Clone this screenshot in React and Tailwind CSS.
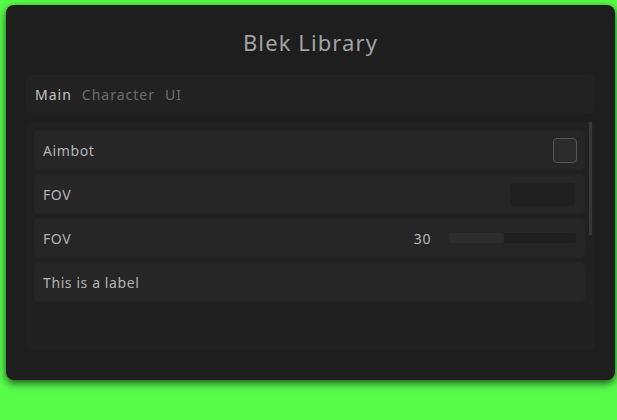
import { useState } from 'react'

const font = { fontFamily: '"Noto Sans", Lato, sans-serif' }

function Row({ children }) {
  return (
    <div className="h-10 shrink-0 flex items-center justify-between rounded-[5px] bg-[#262626] pl-[9px] pr-[8px]">
      {children}
    </div>
  )
}

export default function App() {
  const [checked, setChecked] = useState(false)
  const tabs = ['Main', 'Character', 'UI']

  return (
    <div className="w-[617px] h-[420px] bg-[#58fc4b] overflow-hidden pt-[5px] pl-[6px]" style={font}>
      <div className="w-[609px] h-[375px] bg-[#1e1e1e] rounded-[8px] shadow-[0_3px_9px_rgba(0,0,0,0.7)] flex flex-col px-[20px]">
        <h1 className="h-[70px] flex items-center justify-center pt-[5px] text-[22px] text-[#a3a3a3] tracking-[1.1px]">
          Blek Library
        </h1>

        <div className="h-[38px] rounded-[5px] bg-[#222222] flex items-center gap-[10px] px-[9px] text-[14px] tracking-[1px]">
          {tabs.map((t, i) => (
            <span key={t} className={i === 0 ? 'text-[#c4c4c4]' : 'text-[#6e6e6e]'}>{t}</span>
          ))}
        </div>

        <div className="mt-[9px] h-[227px] rounded-[5px] bg-[#212121] flex pl-[8px] pt-[8px] pr-[1px]">
          <div className="flex-1 flex flex-col gap-[4px] text-[14px] tracking-[0.6px] text-[#b4b4b4]">
            <Row>
              <span>Aimbot</span>
              <button
                type="button"
                onClick={() => setChecked(!checked)}
                className="w-[24px] h-[25px] rounded-[4px] border border-[#565656] bg-[#2c2c2c]"
              />
            </Row>
            <Row>
              <span>FOV</span>
              <div className="w-[65px] h-[23px] rounded-[4px] bg-[#202020] mr-[2px]" />
            </Row>
            <Row>
              <span>FOV</span>
              <div className="flex items-center">
                <span className="text-[#b9b9b9] mr-[18px]">30</span>
                <div className="w-[127px] h-[10px] rounded-[2px] bg-[#1f1f1f] mr-[1px]">
                  <div className="h-full w-[55px] rounded-[2px] bg-[#2d2d2d]" />
                </div>
              </div>
            </Row>
            <Row>
              <span>This is a label</span>
            </Row>
          </div>
          <div className="w-[9px] flex justify-center -mt-[8px]">
            <div className="w-[3px] h-[113px] bg-[#383838] ml-[1px]" />
          </div>
        </div>
      </div>
    </div>
  )
}
